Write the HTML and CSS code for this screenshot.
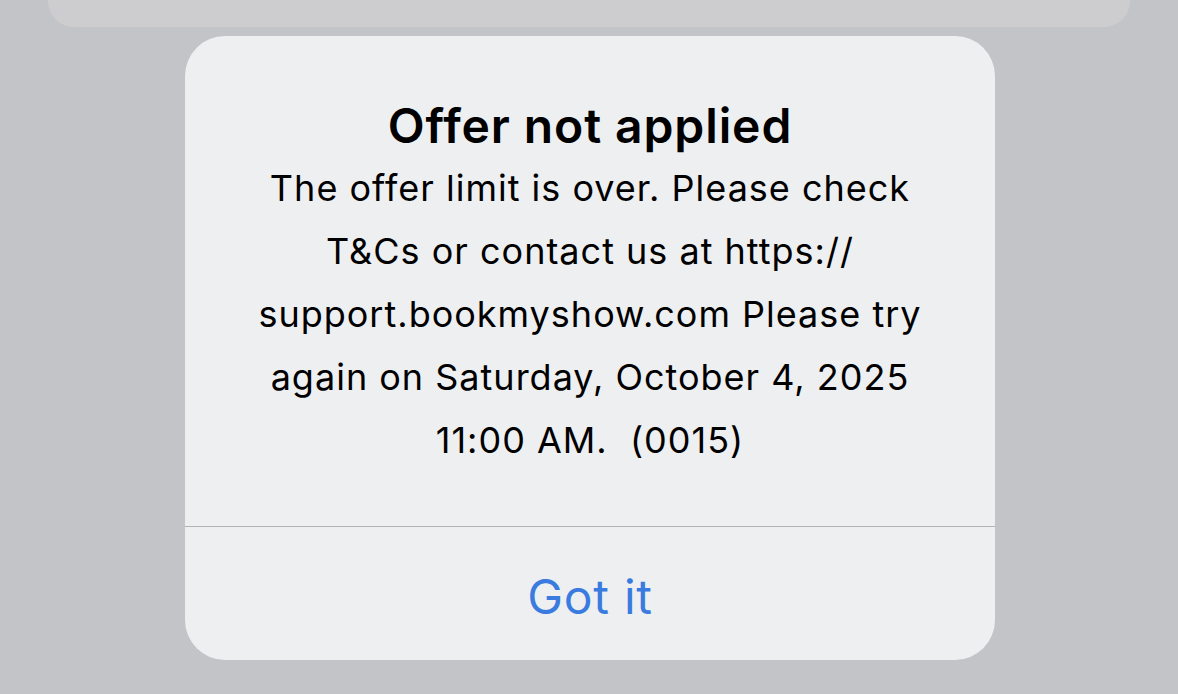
FILE: index.html
```html
<!DOCTYPE html>
<html>
<head>
<meta charset="utf-8">
<link rel="stylesheet" href="styles.css">
</head>
<body>
<div class="screen">
  <div class="back-card"></div>
  <div class="alert">
    <div class="alert-content">
      <h1 class="alert-title">Offer not applied</h1>
      <p class="alert-message">The offer limit is over. Please check<br>T&amp;Cs or contact us at https://<br>support.bookmyshow.com Please try<br>again on Saturday, October 4, 2025<br>11:00 AM.&nbsp; (0015)</p>
    </div>
    <div class="alert-actions">
      <button class="alert-button">Got it</button>
    </div>
  </div>
</div>
</body>
</html>
```

FILE: styles.css
```css
html, body {
  margin: 0;
  padding: 0;
  background: #c3c4c8;
}
body {
  width: 1178px;
  height: 694px;
  overflow: hidden;
  font-family: Inter, "Noto Sans", "Liberation Sans", sans-serif;
}
.screen {
  display: flex;
  flex-direction: column;
}
.back-card {
  margin: 0 48px 0 48px;
  height: 27px;
  background: #cdcdcf;
  border-radius: 0 0 26px 26px;
}
.alert {
  margin: 9px 0 0 185px;
  width: 810px;
  height: 624px;
  background: #eeeff1;
  border-radius: 40px;
  display: flex;
  flex-direction: column;
  overflow: hidden;
}
.alert-content {
  padding: 58px 20px 0;
  height: 491px;
  flex: none;
  box-sizing: border-box;
  border-bottom: 1px solid #b3b3b6;
  text-align: center;
  color: #000;
}
.alert-title {
  margin: 0;
  font-size: 48px;
  font-weight: 600;
  line-height: 63px;
  letter-spacing: 0.9px;
}
.alert-message {
  margin: 0;
  font-size: 36px;
  font-weight: 400;
  line-height: 63px;
  letter-spacing: 1px;
}
.alert-actions {
  flex: 1;
  display: flex;
  align-items: center;
  justify-content: center;
}
.alert-button {
  border: none;
  background: none;
  font-family: inherit;
  font-size: 48px;
  letter-spacing: 0.7px;
  color: #3a7be0;
  padding: 0;
  margin-top: 6px;
}
```
